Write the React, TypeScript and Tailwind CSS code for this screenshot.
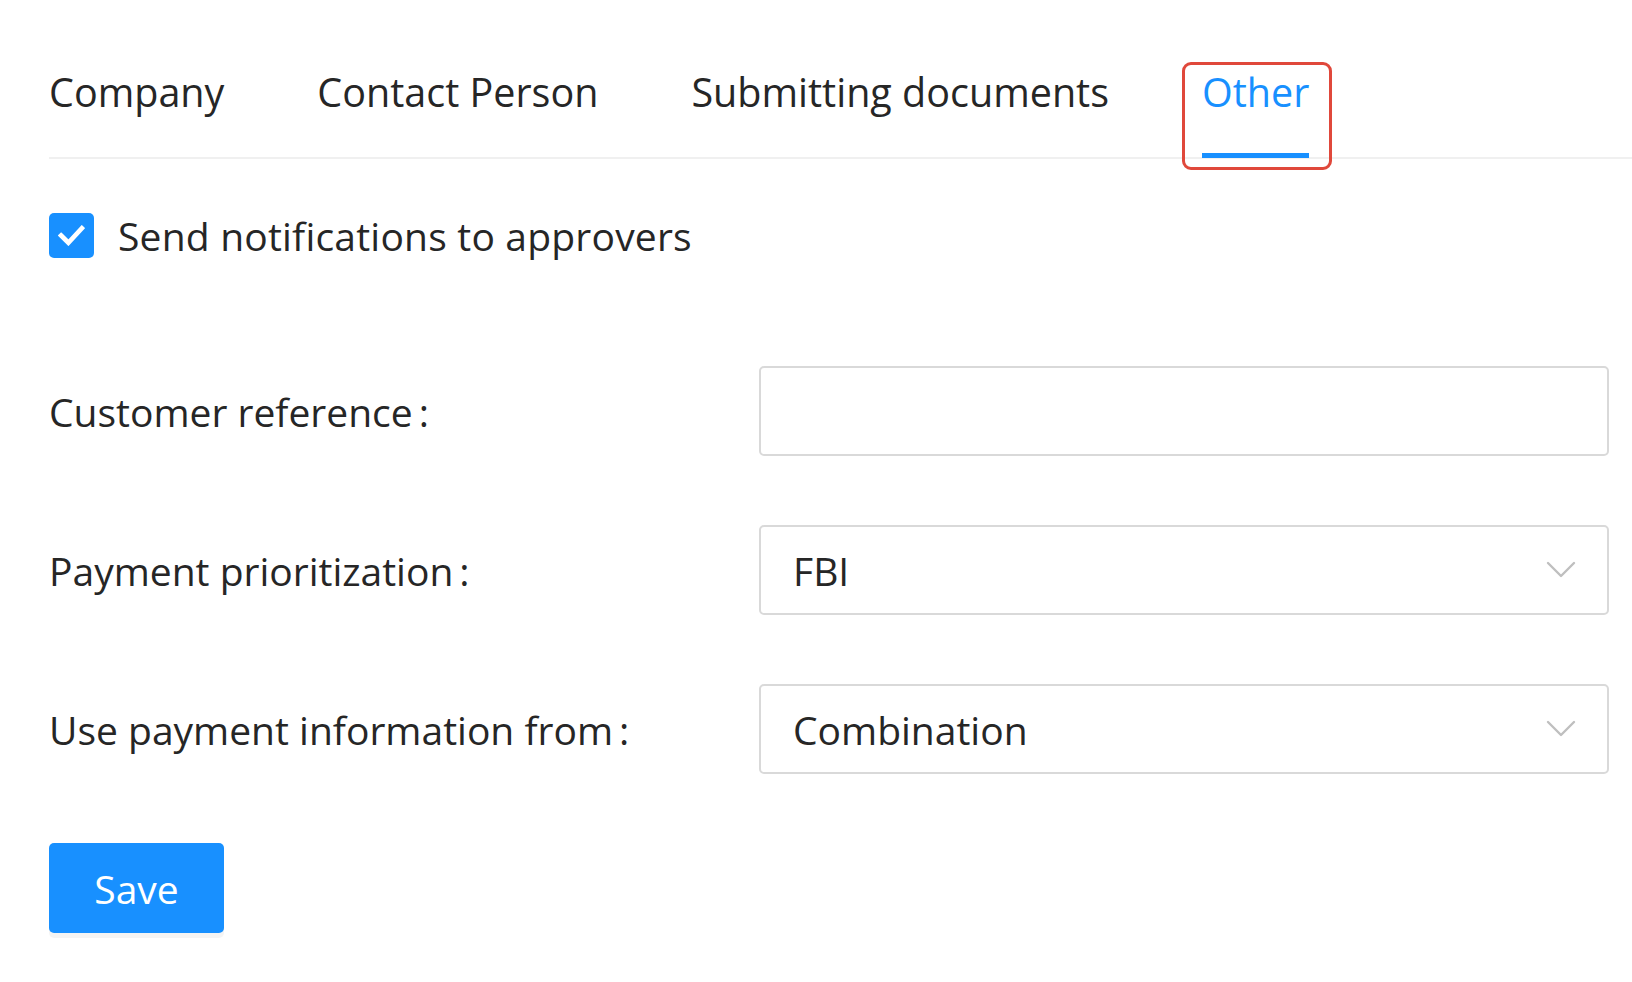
import React, { useState } from "react";

const tabs = ["Company", "Contact Person", "Submitting documents", "Other"];

const Chevron = () => (
  <svg width="30" height="18" viewBox="0 0 30 18" fill="none" className="shrink-0">
    <polyline points="2,2 15,15 28,2" stroke="#bfbfbf" strokeWidth="2.4" strokeLinecap="round" strokeLinejoin="round" />
  </svg>
);

const FormRow = ({ label, children }: { label: string; children: React.ReactNode }) => (
  <div className="flex items-center mb-[69px]">
    <div className="w-[710px] shrink-0 text-[#262626]">
      {label}
      <span className="ml-[6px]">:</span>
    </div>
    <div className="flex-1">{children}</div>
  </div>
);

const SelectBox = ({ value }: { value: string }) => (
  <div className="h-[90px] border-2 border-[#d9d9d9] rounded-[5px] flex items-center justify-between pl-[32px] pr-[31px] text-[#262626]">
    <span>{value}</span>
    <Chevron />
  </div>
);

export default function App() {
  const [active, setActive] = useState(3);
  const [checked, setChecked] = useState(true);

  return (
    <div className="min-h-screen bg-white pt-[28px] pl-[49px] text-[39px] font-['Open_Sans','Liberation_Sans',sans-serif] leading-[61px]">
      <div className="flex gap-[93px] border-b-2 border-[#f0f0f0] text-[39.5px]">
        {tabs.map((t, i) => (
          <div
            key={t}
            onClick={() => setActive(i)}
            className={`relative py-[34px] cursor-pointer ${i === active ? "text-[#1890ff]" : "text-[#262626]"}`}
          >
            {t}
            {i === active && (
              <>
                <div className="absolute left-0 right-0 bottom-[-1px] h-[5px] bg-[#1890ff]" />
                <div className="absolute left-[-20px] right-[-23px] top-[34px] bottom-[-13px] border-[3px] border-[#e0483b] rounded-[9px] pointer-events-none" />
              </>
            )}
          </div>
        ))}
      </div>

      <div className="pr-[23px]">
        <label className="flex items-center gap-[24px] mt-[46px] cursor-pointer text-[#262626] tracking-[0.2px]" onClick={() => setChecked(!checked)}>
          <span className={`w-[45px] h-[45px] rounded-[5px] flex items-center justify-center ${checked ? "bg-[#1890ff]" : "border-2 border-[#d9d9d9]"}`}>
            {checked && (
              <svg width="27" height="21" viewBox="0 0 26 20" fill="none">
                <polyline points="3,10 10,17 23,3" stroke="white" strokeWidth="4.5" strokeLinecap="square" />
              </svg>
            )}
          </span>
          <span>Send notifications to approvers</span>
        </label>

        <div className="mt-[100px]">
          <FormRow label="Customer reference">
            <input className="w-full h-[90px] border-2 border-[#d9d9d9] rounded-[5px] px-[32px] outline-none" />
          </FormRow>
          <FormRow label="Payment prioritization">
            <SelectBox value="FBI" />
          </FormRow>
          <FormRow label="Use payment information from">
            <SelectBox value="Combination" />
          </FormRow>
        </div>

        <button className="w-[175px] h-[90px] bg-[#1890ff] text-white rounded-[5px] shadow-[0_5px_0_rgba(0,0,0,0.045)]">
          Save
        </button>
      </div>
    </div>
  );
}
